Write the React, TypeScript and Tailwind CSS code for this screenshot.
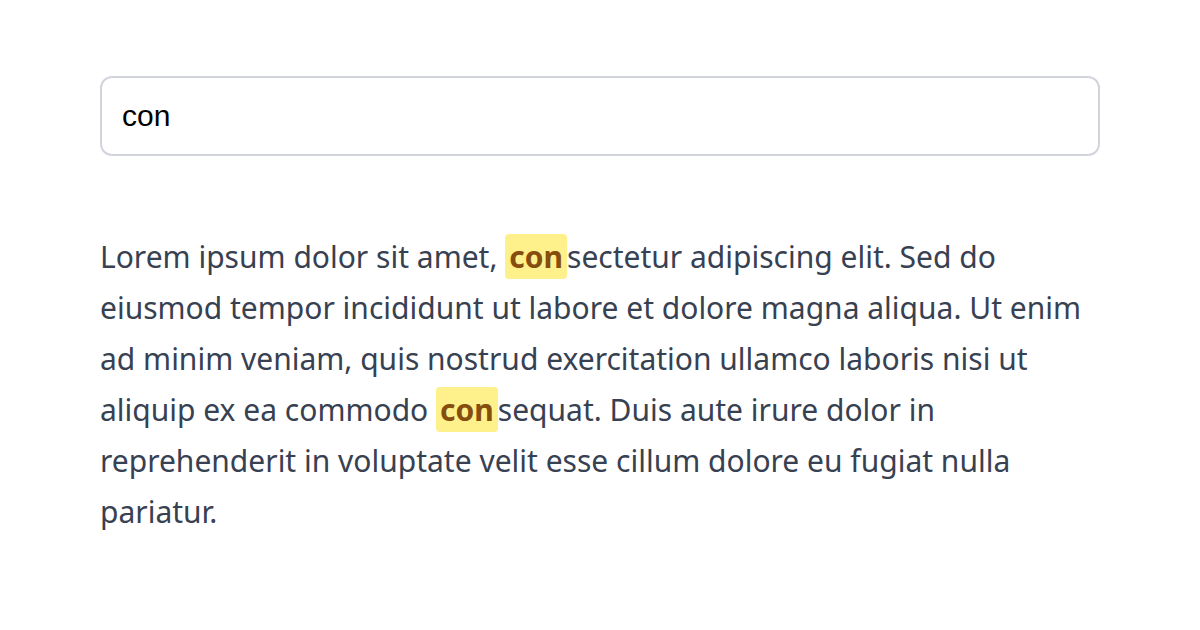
import React from "react";

function Mark({ children }: { children: React.ReactNode }) {
  return (
    <mark className="rounded bg-[#fef08a] px-1 py-[2px] font-bold text-[#854d0e]">{children}</mark>
  );
}

export default function App() {
  return (
    <div className="min-h-[630px] w-[1200px] bg-white px-[100px] pt-[76px]">
      <input
        readOnly
        value="con"
        className="box-border h-[80px] w-full rounded-xl border-2 border-[#d1d5db] bg-white px-5 font-['Liberation_Sans',Arial,sans-serif] text-[30px] text-black outline-none"
      />
      <p className="mt-[75px] font-['Noto_Sans',sans-serif] text-[30px] leading-[51px] text-[#374151]">
        Lorem ipsum dolor sit amet, <Mark>con</Mark>sectetur adipiscing elit. Sed do eiusmod tempor incididunt ut
        labore et dolore magna aliqua. Ut enim ad minim veniam, quis nostrud exercitation ullamco laboris nisi ut
        aliquip ex ea commodo <Mark>con</Mark>sequat. Duis aute irure dolor in reprehenderit in voluptate velit esse
        cillum dolore eu fugiat nulla pariatur.
      </p>
    </div>
  );
}
